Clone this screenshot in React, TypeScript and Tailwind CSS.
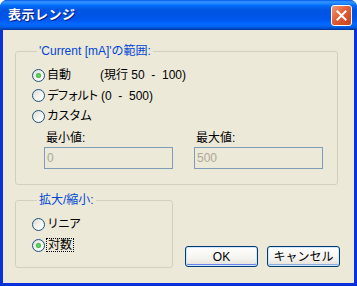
import React from "react";

const font = { fontFamily: '"Liberation Sans", "Noto Sans CJK JP", sans-serif' };

function Radio({ checked = false }: { checked?: boolean }) {
  return (
    <span className="w-[13px] h-[13px] shrink-0 rounded-full border border-[#1C5180] bg-[linear-gradient(135deg,#DCDCD7,#F4F4F0_55%,#FFFFFF)] flex items-center justify-center">
      {checked && (
        <span className="w-[5px] h-[5px] rounded-full bg-[radial-gradient(circle,#6DE06D,#21A121)]" />
      )}
    </span>
  );
}

function XpButton({ label, isDefault = false }: { label: string; isDefault?: boolean }) {
  return (
    <button
      className={
        "w-[73px] h-[21px] rounded-[3px] border border-[#003C74] bg-[linear-gradient(180deg,#FFFFFF,#F4F3EE_60%,#E3DFD6)] text-[12px] text-black leading-none flex items-center justify-center " +
        (isDefault
          ? "shadow-[inset_0_0_0_1px_#CEE7FF,inset_0_-1px_0_1px_#6982EE]"
          : "shadow-[inset_0_0_0_1px_#CEE7FF,inset_0_-1px_0_1px_#89ADE4]")
      }
    >
      {label}
    </button>
  );
}

export default function App() {
  return (
    <div
      style={font}
      className="w-[357px] h-[286px] flex flex-col bg-[#0831D9] rounded-t-[7px] overflow-hidden text-[12px] text-black"
    >
      {/* title bar */}
      <div className="h-[30px] shrink-0 flex items-center pl-[8px] pr-[5px] bg-[linear-gradient(180deg,#0058EE_0%,#3593FF_6%,#288EFF_10%,#127DFF_14%,#036FFC_18%,#0262EE_24%,#0057E5_32%,#0054E3_40%,#0055EB_60%,#005BF5_70%,#026AFE_80%,#0062EF_88%,#0052D6_94%,#0040AB_97%,#003092_100%)]">
        <span className="text-white font-bold text-[13px] tracking-[0.5px] [text-shadow:1px_1px_#0A1883]">
          表示レンジ
        </span>
        <div className="ml-auto w-[21px] h-[21px] rounded-[3px] border border-white bg-[linear-gradient(135deg,#F09A7A,#E25E36_45%,#C4421D)] flex items-center justify-center">
          <svg width="11" height="11" viewBox="0 0 11 11">
            <path d="M1.5 1.5 L9.5 9.5 M9.5 1.5 L1.5 9.5" stroke="#FFFFFF" strokeWidth="2" strokeLinecap="square" />
          </svg>
        </div>
      </div>

      {/* client area */}
      <div className="flex-1 mx-[3px] mb-[3px] bg-[#ECE9D8] pl-[12px] pt-[14px]">
        <fieldset className="w-[323px] h-[141px] border border-[#D0D0BF] rounded-[3px] pl-[16px]">
          <legend className="ml-[5px] px-[2px] leading-[14px] text-[#0046D5]">'Current [mA]'の範囲:</legend>
          <div className="pt-[7px] flex flex-col">
            <div className="h-[20px] flex items-center whitespace-pre">
              <Radio checked />
              <span className="ml-[2px] w-[53px] shrink-0">自動</span>
              <span>(現行 50  -  100)</span>
            </div>
            <div className="h-[21px] flex items-center whitespace-pre">
              <Radio />
              <span className="ml-[2px] w-[54px] shrink-0">
                <span className="tracking-[-2px]">デフォルト</span>
              </span>
              <span>(0  -  500)</span>
            </div>
            <div className="h-[20px] flex items-center">
              <Radio />
              <span className="ml-[2px] tracking-[-1px]">カスタム</span>
            </div>
            <div className="mt-[5px] ml-[12px] flex gap-[21px]">
              <div className="w-[129px] flex flex-col">
                <span className="ml-[2px] leading-[14px]">最小値:</span>
                <div className="mt-[2px] h-[22px] border border-[#7F9DB9] flex items-center px-[2px] text-[#ACA899]">0</div>
              </div>
              <div className="w-[129px] flex flex-col">
                <span className="ml-[2px] leading-[14px]">最大値:</span>
                <div className="mt-[2px] h-[22px] border border-[#7F9DB9] flex items-center px-[2px] text-[#ACA899]">500</div>
              </div>
            </div>
          </div>
        </fieldset>

        <div className="mt-[8px] flex items-end">
          <fieldset className="w-[158px] h-[75px] border border-[#D0D0BF] rounded-[3px] pl-[16px]">
            <legend className="ml-[5px] px-[2px] leading-[14px] text-[#0046D5]">拡大/縮小:</legend>
            <div className="pt-[7px] flex flex-col gap-[1px]">
              <div className="h-[20px] flex items-center">
                <Radio />
                <span className="ml-[2px] tracking-[-1px]">リニア</span>
              </div>
              <div className="h-[20px] flex items-center">
                <Radio checked />
                <span className="ml-[1px] px-[1px] border border-dotted border-black leading-[12px]">対数</span>
              </div>
            </div>
          </fieldset>
          <div className="ml-[12px] mb-[1px] flex gap-[9px]">
            <XpButton label="OK" isDefault />
            <XpButton label="キャンセル" />
          </div>
        </div>
      </div>
    </div>
  );
}
